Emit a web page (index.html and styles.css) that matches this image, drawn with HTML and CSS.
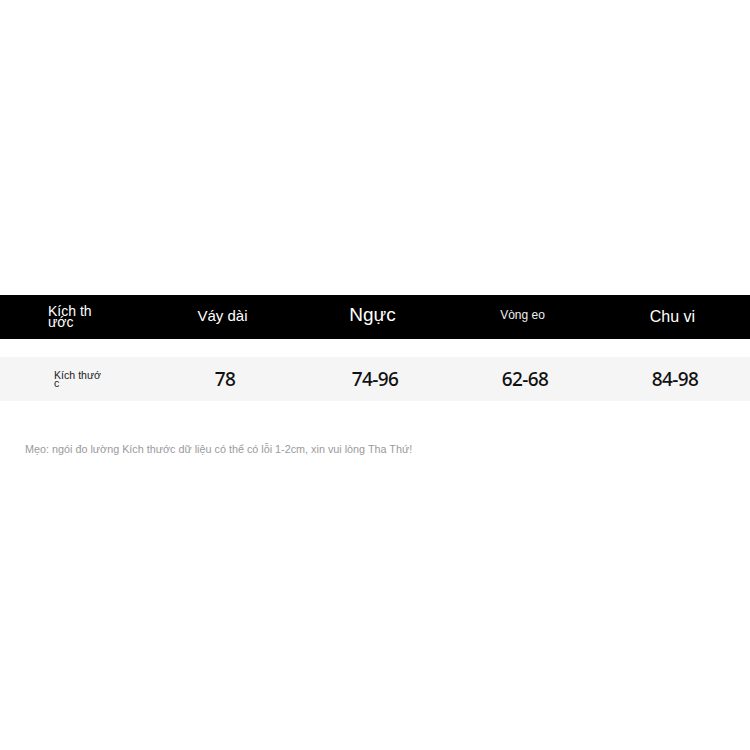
FILE: index.html
```html
<!DOCTYPE html>
<html lang="vi">
<head>
<meta charset="utf-8">
<link rel="stylesheet" href="styles.css">
</head>
<body>
<div class="page">
  <div class="row head">
    <div class="cell first"><span class="wrap w14">Kích thước</span></div>
    <div class="cell"><span class="t15">Váy dài</span></div>
    <div class="cell"><span class="t19">Ngực</span></div>
    <div class="cell"><span class="t12">Vòng eo</span></div>
    <div class="cell"><span class="t16">Chu vi</span></div>
  </div>
  <div class="row data">
    <div class="cell first"><span class="wrap w10">Kích thước</span></div>
    <div class="cell num">78</div>
    <div class="cell num">74-96</div>
    <div class="cell num">62-68</div>
    <div class="cell num">84-98</div>
  </div>
  <p class="note">Mẹo: ngói đo lường Kích thước dữ liệu có thể có lỗi 1-2cm, xin vui lòng Tha Thứ!</p>
</div>
</body>
</html>
```
FILE: styles.css
```css
html, body {
  margin: 0;
  padding: 0;
  background: #fff;
}
.page {
  width: 750px;
  padding-top: 295px;
  font-family: "Liberation Sans", Arial, sans-serif;
}
.row {
  display: flex;
  height: 44px;
}
.cell {
  width: 150px;
  display: flex;
  align-items: center;
  justify-content: center;
}
.head {
  background: #000;
  color: #fff;
}
.head .cell {
  padding-right: 5px;
  padding-bottom: 4px;
  box-sizing: border-box;
}
.head .cell.first {
  justify-content: flex-start;
  padding-left: 48px;
  padding-bottom: 1px;
}
.wrap {
  display: block;
  word-break: break-all;
}
.w14 {
  font-size: 14px;
  line-height: 11px;
  width: 50px;
}
.w10 {
  font-size: 10.6px;
  line-height: 8px;
  width: 51px;
  color: #222;
}
.t15 { font-size: 15px; }
.t19 { font-size: 19px; }
.t12 { font-size: 12px; color: #eee; }
.t16 { font-size: 16px; padding-top: 3px; }
.data {
  margin-top: 18px;
  background: #f5f5f5;
}
.data .cell.first {
  justify-content: flex-start;
  padding-left: 54px;
  box-sizing: border-box;
}
.num {
  font-family: "Noto Sans", "Open Sans", sans-serif;
  font-weight: 500;
  font-size: 19px;
  letter-spacing: -0.6px;
  color: #111;
}
.note {
  margin: 42px 0 0 25px;
  font-size: 10.8px;
  color: #9a9a9a;
}
```
